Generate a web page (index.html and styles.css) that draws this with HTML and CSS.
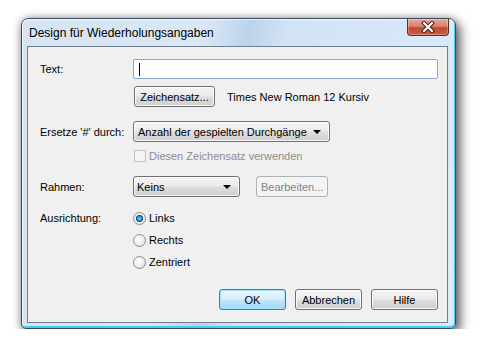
FILE: index.html
```html
<!DOCTYPE html>
<html lang="de">
<head>
    <meta charset="UTF-8">
    <title>Design für Wiederholungsangaben</title>
    <link rel="stylesheet" href="styles.css">
</head>
<body>

    <div class="window">
        <!-- Title bar -->
        <div class="titlebar">
            <span class="title">Design für Wiederholungsangaben</span>
            <div class="close">
                <svg width="16" height="12" viewBox="0 0 16 12">
                    <path d="M4 2 L12 10 M12 2 L4 10" stroke="#3b1a14" stroke-width="4" stroke-linecap="square"/>
                    <path d="M4 2 L12 10 M12 2 L4 10" stroke="#ffffff" stroke-width="2.2" stroke-linecap="square"/>
                </svg>
            </div>
        </div>

        <!-- Dialog content -->
        <div class="client">
            <div class="row row-text">
                <span class="label">Text:</span>
                <div class="textbox"><span class="caret"></span></div>
            </div>

            <div class="row row-font indent">
                <button class="btn btn-font">Zeichensatz...</button>
                <span class="font-name">Times New Roman 12 Kursiv</span>
            </div>

            <div class="row row-replace">
                <span class="label">Ersetze '#' durch:</span>
                <div class="combo combo-wide">
                    <span>Anzahl der gespielten Durchgänge</span>
                    <span class="arrow"></span>
                </div>
            </div>

            <div class="row row-check indent">
                <span class="checkbox"></span>
                <span class="disabled-text">Diesen Zeichensatz verwenden</span>
            </div>

            <div class="row row-frame">
                <span class="label">Rahmen:</span>
                <div class="combo combo-small">
                    <span>Keins</span>
                    <span class="arrow"></span>
                </div>
                <button class="btn btn-disabled btn-edit">Bearbeiten...</button>
            </div>

            <div class="row row-align">
                <span class="label">Ausrichtung:</span>
                <div class="radios">
                    <div class="radio-item"><span class="radio checked"></span>Links</div>
                    <div class="radio-item"><span class="radio"></span>Rechts</div>
                    <div class="radio-item"><span class="radio"></span>Zentriert</div>
                </div>
            </div>

            <div class="buttons">
                <button class="btn btn-default">OK</button>
                <button class="btn">Abbrechen</button>
                <button class="btn">Hilfe</button>
            </div>
        </div>
    </div>

</body>
</html>
```

FILE: styles.css
```css
body {
    margin: 0;
    padding: 0;
    background-color: #fff;
    font-family: "Liberation Sans", Arial, sans-serif;
    font-size: 11px;
    color: #000;
}

/* Window frame */
.window {
    box-sizing: border-box;
    width: 435px;
    height: 311px;
    margin: 18px 0 0 21px;
    padding: 0 7px 5px 5px;
    border: 1px solid #3c4b5c;
    border-radius: 7px 7px 5px 5px;
    background: linear-gradient(100deg, #d6e4f2 0%, #dae7f5 38%, #bcd3ec 47%, #d2e3f5 55%, #dcebf9 100%);
    box-shadow: inset -1px -2px 0 #45cdf6, inset 1px 1px 0 rgba(255, 255, 255, 0.7), 4px 5px 12px rgba(0, 0, 0, 0.6), 0 0 8px rgba(0, 0, 0, 0.3);
}

.titlebar {
    display: flex;
    justify-content: space-between;
    align-items: flex-start;
    height: 27px;
}
.title {
    font-size: 12px;
    padding: 7px 0 0 2px;
}
.close {
    display: flex;
    align-items: center;
    justify-content: center;
    width: 42px;
    height: 17px;
    margin-right: -1px;
    box-sizing: border-box;
    border: 1px solid #6b2a1f;
    border-top: none;
    border-radius: 0 0 4px 4px;
    background: linear-gradient(#e8a99c 0%, #d88270 45%, #c14a33 55%, #d0583e 100%);
    box-shadow: inset 0 0 0 1px rgba(255, 255, 255, 0.3);
}

/* Client area */
.client {
    box-sizing: border-box;
    height: 277px;
    padding: 12px 9px 0 12px;
    border: 1px solid #6f7f91;
    background-color: #f0f0f0;
}

.row {
    display: flex;
    align-items: center;
}
.indent {
    padding-left: 93px;
}
.label {
    width: 93px;
    flex-shrink: 0;
}

.row-text {
    height: 20px;
}
.textbox {
    box-sizing: border-box;
    width: 305px;
    height: 20px;
    padding: 3px 0 0 5px;
    border: 1px solid #85a7cd;
    border-radius: 2px;
    background: #fff;
}
.caret {
    display: block;
    width: 1px;
    height: 13px;
    background: #000;
}

.row-font {
    margin-top: 7px;
}
.font-name {
    margin-left: 12px;
}

/* Buttons */
.btn {
    box-sizing: border-box;
    height: 21px;
    padding: 0 4px;
    font-family: "Liberation Sans", Arial, sans-serif;
    font-size: 11px;
    color: #000;
    border: 1px solid #707070;
    border-radius: 3px;
    background: linear-gradient(#f4f4f4 0%, #ebebeb 48%, #dddddd 52%, #cfcfcf 100%);
    box-shadow: inset 0 0 0 1px rgba(255, 255, 255, 0.8);
}
.btn-font {
    width: 81px;
    margin-left: 1px;
}
.btn-disabled {
    color: #838383;
    border-color: #adb2b5;
    background: #f4f4f4;
    box-shadow: none;
}
.btn-edit {
    width: 72px;
    margin-left: 16px;
}
.btn-default {
    border-color: #3c7fb1;
    background: linear-gradient(#eaf6fd 0%, #d9f0fc 48%, #bee6fd 52%, #a7d9f5 100%);
    box-shadow: inset 0 0 0 1px #9fe2ff;
}

/* Combo boxes */
.combo {
    box-sizing: border-box;
    display: flex;
    align-items: center;
    justify-content: space-between;
    height: 21px;
    padding: 0 8px 0 4px;
    border: 1px solid #707070;
    border-radius: 3px;
    background: linear-gradient(#f4f4f4 0%, #ebebeb 48%, #dddddd 52%, #cfcfcf 100%);
    box-shadow: inset 0 0 0 1px rgba(255, 255, 255, 0.8);
}
.combo-wide {
    width: 197px;
}
.combo-small {
    width: 107px;
    padding-left: 3px;
}
.arrow {
    width: 0;
    height: 0;
    border-left: 4px solid transparent;
    border-right: 4px solid transparent;
    border-top: 4px solid #000;
}

.row-replace {
    margin-top: 14px;
}

.row-check {
    margin-top: 7px;
    height: 13px;
}
.checkbox {
    box-sizing: border-box;
    width: 12px;
    height: 12px;
    margin: 0 3px 0 1px;
    border: 1px solid #c2c2c2;
    background: #f4f4f4;
}
.disabled-text {
    color: #8d8d8d;
}

.row-frame {
    margin-top: 14px;
}

/* Radio buttons */
.row-align {
    align-items: flex-start;
    margin-top: 10px;
}
.row-align .label {
    line-height: 22px;
}
.radio-item {
    display: flex;
    align-items: center;
    height: 22px;
}
.radio {
    box-sizing: border-box;
    width: 13px;
    height: 13px;
    margin-right: 3px;
    border: 1px solid #8e8f8f;
    border-radius: 50%;
    background: radial-gradient(circle at 40% 35%, #ffffff 0%, #eeeeee 50%, #d4d4d4 100%);
}
.radio.checked {
    background: radial-gradient(circle, #7ee0ff 0%, #1f8bc6 28%, #124f7a 42%, #f2f2f2 50%, #dadada 100%);
}

.buttons {
    display: flex;
    justify-content: flex-end;
    gap: 9px;
    margin-top: 16px;
}
.buttons .btn {
    width: 67px;
}
```
